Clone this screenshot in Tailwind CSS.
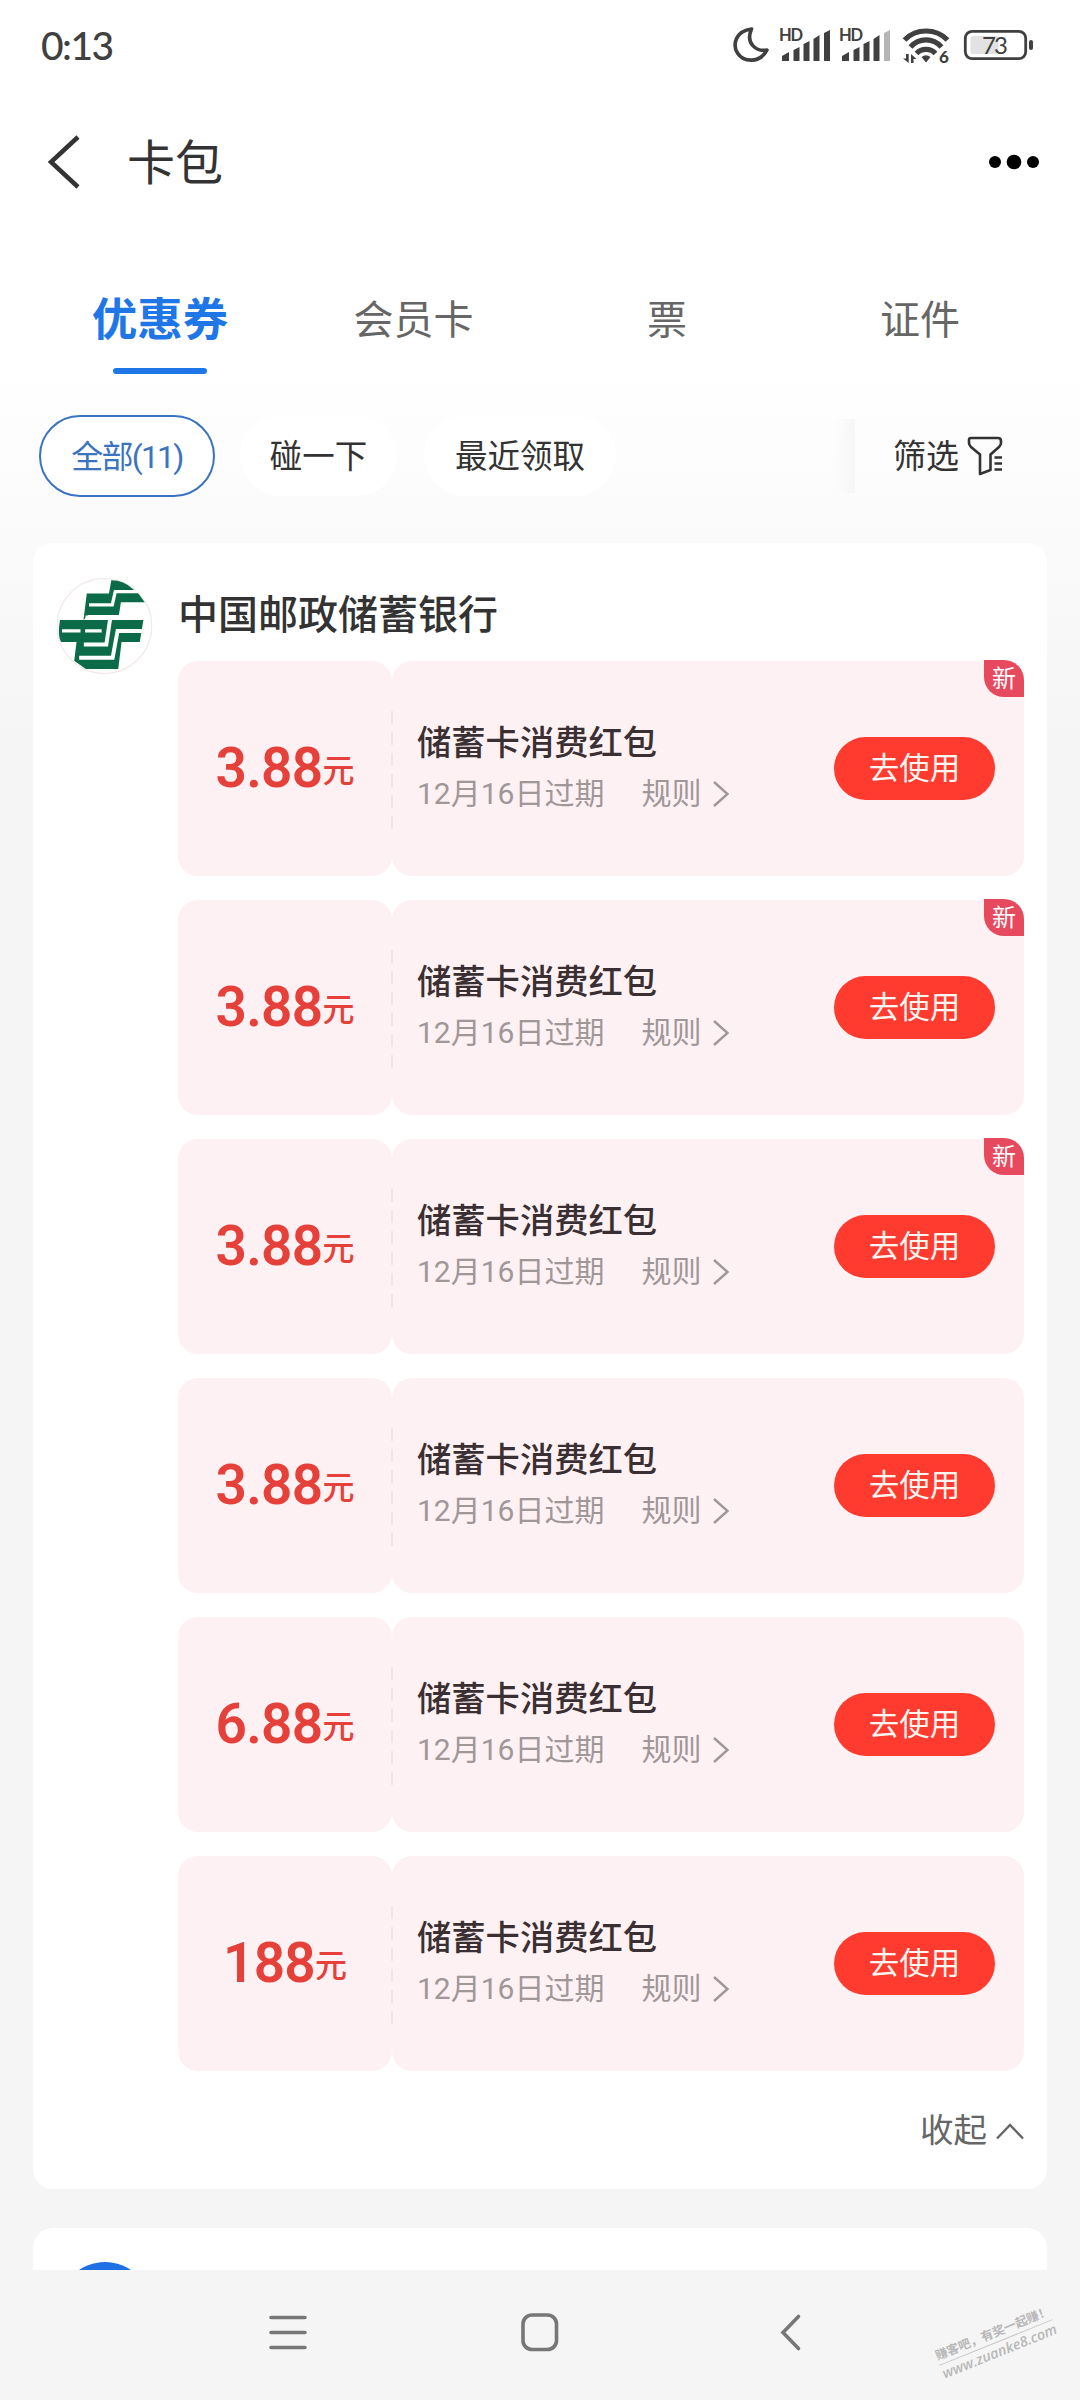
<!DOCTYPE html>
<html lang="zh-CN">
<head>
<meta charset="utf-8">
<title>卡包</title>
<script src="https://cdn.jsdelivr.net/npm/@tailwindcss/browser@4"></script>
</head>
<body class="bg-[#f5f5f5]">
<div class="flex h-[2400px] w-[1080px] flex-col overflow-hidden bg-linear-to-b from-white from-[360px] to-[#f5f5f5] to-[740px] font-[Roboto,'Noto_Sans_CJK_SC',sans-serif] text-[#333]">

  <!-- status bar -->
  <header class="flex h-[90px] shrink-0 items-center justify-between pr-[46px] pl-[41px]">
    <div class="font-[Lato,Roboto,sans-serif] text-[39px] leading-[90px] font-medium tracking-[-1.5px] text-[#404040]">0:13</div>
    <svg width="302" height="44" viewBox="732 23 302 44" fill="#404040">
      <path d="M751.500 29 C736 31 732 44 737.500 53 C743 62 760 64 767 50 C757 52 745 44 751.500 29Z" fill="none" stroke="#404040" stroke-width="3.600" stroke-linejoin="round"/>
      <text x="779" y="41" font-size="16.500" font-weight="700" font-family="Lato" textLength="24">HD</text>
      <path d="M782 61v-5l7-4v9zM793.500 61V50l6-3v14zM803.500 61V44l6-3v20zM813.500 61V39l6-4v26zM824 61V33l6-3v31z"/>
      <text x="839" y="41" font-size="16.500" font-weight="700" font-family="Lato" textLength="24">HD</text>
      <path d="M842 61v-5l7-4v9zM853.500 61V50l6-3v14zM863.500 61V44l6-3v20zM873.500 61V39l6-4v26z"/>
      <path d="M884 61V33l6-3v31z" fill="#b5b5b5"/>
      <g fill="none" stroke="#404040" stroke-width="5.200">
        <path d="M904.500 40C916 28 936 28 947.500 40"/><path d="M910.500 47C919 37.500 933 37.500 941.500 47"/><path d="M916.500 53.500C921.500 48 930.500 48 935.500 53.500"/>
      </g>
      <path d="M921.500 57q4.500-3.500 9 0l-4.500 5.500z"/>
      <path d="M903 58.500l3 0V54h2.700v9zM911 54l5.500 5h-3v4h-2.500z"/>
      <text x="939" y="62.500" font-size="17" font-weight="900" font-family="Lato">6</text>
      <rect x="965.300" y="31.300" width="60.400" height="27.400" rx="7" fill="none" stroke="#404040" stroke-width="2.800"/>
      <rect x="970.500" y="36" width="28" height="18" rx="3" fill="#e2e2e2"/>
      <text x="982" y="54" font-size="24" font-family="Lato" textLength="26">73</text>
      <rect x="1029" y="40" width="4" height="10" rx="2"/>
    </svg>
  </header>

  <!-- title bar -->
  <div class="flex h-[144px] shrink-0 items-center justify-between pr-[41px] pl-[48px]">
    <div class="flex items-center gap-[47px]">
      <svg width="32" height="54" viewBox="0 0 32 54" fill="none" stroke="#333" stroke-width="4.500"><path d="M30 2 3 27l27 25"/></svg>
      <h1 class="pt-[3px] text-[48px] leading-[60px]">卡包</h1>
    </div>
    <svg width="50" height="16" viewBox="0 0 50 16"><circle cx="6" cy="8" r="6"/><circle cx="25" cy="8" r="7.300"/><circle cx="44" cy="8" r="6"/></svg>
  </div>

  <!-- tabs -->
  <nav class="grid h-[140px] shrink-0 grid-cols-[320px_187px_320px_186px] content-start pt-[57px] text-center text-[40px] leading-[60px] text-[#666]">
    <div class="flex flex-col items-center">
      <span class="text-[45.500px] font-bold text-[#1f76e6]">优惠券</span>
      <i class="mt-[17px] block h-[6px] w-[94px] rounded-full bg-[#1f76e6]"></i>
    </div>
    <span>会员卡</span><span>票</span><span>证件</span>
  </nav>

  <!-- filters -->
  <div class="mt-[41px] flex h-[82px] shrink-0 items-center pl-[39px] text-[32.500px] leading-[82px]">
    <span class="h-[82px] w-[176px] rounded-full border-2 border-[#3a74c0] bg-white text-center text-[32px] leading-[80px] tracking-[-1.800px] text-[#3a74c0]">全部(11)</span>
    <span class="ml-[25px] h-[80px] w-[157px] rounded-full bg-white text-center">碰一下</span>
    <span class="ml-[27px] h-[80px] w-[192px] rounded-full bg-white text-center">最近领取</span>
    <span class="ml-[219px] h-[74px] w-5 bg-linear-to-r from-transparent to-[#f6f6f6]"></span>
    <span class="ml-[38px] h-[80px] text-[33px]">筛选</span>
    <svg class="ml-[8px]" width="36" height="40" viewBox="0 0 36 40" fill="none" stroke="#333" stroke-width="2.600" stroke-linejoin="round"><path d="M4 2h27q3 0 3 3v2q0 2-2 4l-8.500 7.500V34L13 38V18.500L4 11q-2-2-2-4V4q0-2 2-2zM27.500 21.500H35M27.500 27.500H35M27.500 33.500H35"/></svg>
  </div>

  <!-- bank card group -->
  <main class="mx-[33px] mt-[46px] flex h-[1646px] shrink-0 gap-[25px] rounded-[20px] bg-white pr-[23px] pl-[24px]">
    <svg class="mt-[34px] shrink-0" width="96" height="98" viewBox="53 52 290 296">
      <circle cx="196" cy="200" r="143" fill="#fff" stroke="#f3e9e9" stroke-width="4"/>
      <path fill="#0b6b48" d="M217 62Q255 62 283 89L300 103L318 128H246L240 167H148L133 182H314L303 248H248L238 330H140L105 305L112 248H65Q54 230 62 182H133L143 102H210Z"/>
      <g fill="none" stroke="#fff" stroke-width="10">
        <path d="M150 136H220L229 96H300"/>
        <path d="M139 175H320" stroke-width="14"/>
        <path d="M134 256H202L214 175" stroke-width="12"/>
        <path d="M68 215H124M138 215H188"/>
        <path d="M120 296H221L236 215H316" stroke-width="12"/>
      </g>
    </svg>
    <div class="flex w-[846px] flex-col">
      <h2 class="mt-[43px] h-[58px] text-[40px] leading-[60px] font-medium">中国邮政储蓄银行</h2>
      <div id="coupons" class="mt-[17px] flex flex-col gap-[24px]"></div>
      <div class="mt-[28px] flex items-center justify-end gap-[9px] text-[33.500px] leading-[64px] text-[#666]">
        收起
        <svg width="28" height="18" viewBox="0 0 28 18" fill="none" stroke="#666" stroke-width="2.400"><path d="M1 16.500 14 3l13 13.500"/></svg>
      </div>
    </div>
  </main>

  <!-- next group, cut off by the navigation bar -->
  <section class="mx-[33px] mt-[39px] h-[42px] shrink-0 overflow-hidden rounded-t-[20px] bg-white pt-[34px] pl-[26px]">
    <div class="size-[92px] rounded-full bg-[#1f6fe5]"></div>
  </section>

  <!-- system navigation -->
  <footer class="relative flex h-[130px] shrink-0 items-start bg-[#f5f5f5] pt-[41px] pl-[268px]">
    <svg width="540" height="42" viewBox="268 2311 540 42" fill="none" stroke="#777" stroke-width="3.600" stroke-linecap="round">
      <path d="M271 2317.500h34M271 2332.500h34M271 2347.500h34"/>
      <rect x="523" y="2315" width="33.500" height="34.500" rx="9"/>
      <path d="M798.500 2316.500 783 2332.500l15.500 16"/>
    </svg>
    <div class="absolute top-[54px] left-[935px] w-[122px] -rotate-[22deg] text-center text-[#b8b8b8]">
      <div class="border-b border-[#c8c8c8] text-[12.300px] leading-[18px] font-bold whitespace-nowrap">赚客吧，有奖一起赚！</div>
      <div class="font-['Open_Sans'] text-[14.300px] leading-[18px] font-semibold italic">www.zuanke8.com</div>
    </div>
  </footer>
</div>

<script>
const coupons = [['3.88', true], ['3.88', true], ['3.88', true], ['3.88', false], ['6.88', false], ['188', false]];
document.getElementById('coupons').innerHTML = coupons.map(([amount, fresh]) => `
  <article class="relative flex h-[215px] shrink-0">
    <div class="flex w-[214px] items-end justify-center rounded-[20px] bg-[#fef1f3] pb-[66px] text-[#e5403a]">
      <b class="text-[55px] leading-[84px] font-semibold tracking-[-0.7px]">${amount}</b><span class="mb-[9px] text-[32px] leading-[60px] font-medium">元</span>
    </div>
    <div class="flex flex-1 items-start justify-between rounded-[20px] bg-[#fef1f3] pr-[29px] pl-[25px]">
      <div class="pt-[57px]">
        <div class="text-[34.300px] leading-[50px] font-medium text-[#3a3033]">储蓄卡消费红包</div>
        <div class="flex items-center text-[30px] leading-[51px] text-[#a09799]">
          12月16日过期<span class="ml-[37px]">规则</span>
          <svg class="ml-[11px]" width="18" height="28" viewBox="0 0 18 28" fill="none" stroke="#a09799" stroke-width="2.400"><path d="M2 2 15.500 14 2 26"/></svg>
        </div>
      </div>
      <button class="mt-[76px] h-[63px] w-[161px] rounded-full bg-[#ff3b30] text-[30.500px] leading-[64px] text-[#fff5f0]">去使用</button>
    </div>
    <i class="absolute top-[50px] left-[213px] h-[122px] w-[2px] bg-[repeating-linear-gradient(to_bottom,#f3e3e6_0_13px,transparent_13px_21px)]"></i>
    ${fresh ? '<span class="absolute -top-px right-0 h-[37px] w-[40px] rounded-tr-[20px] rounded-bl-[20px] bg-[#e74a5f] text-center text-[24px] leading-[38px] text-white">新</span>' : ''}
  </article>`).join('');
</script>
</body>
</html>
